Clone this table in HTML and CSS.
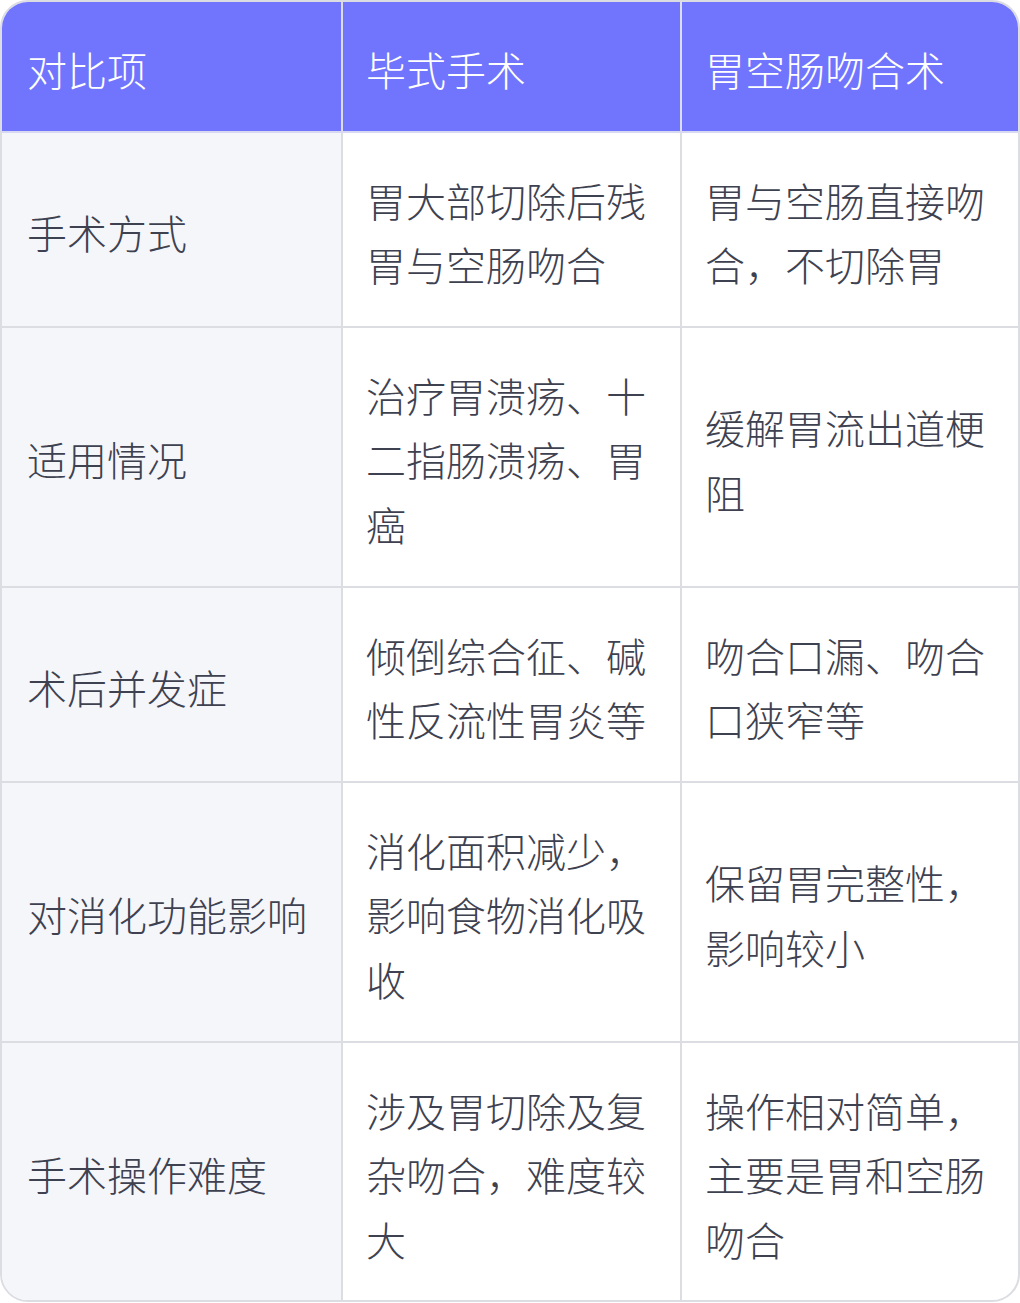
FILE: index.html
```html
<!DOCTYPE html>
<html lang="zh-CN">
<head>
<meta charset="utf-8">
<link rel="stylesheet" href="styles.css">
</head>
<body>
<table class="cmp">
  <colgroup>
    <col class="c1">
    <col class="c2">
    <col class="c3">
  </colgroup>
  <thead>
    <tr>
      <th class="first">对比项</th>
      <th>毕式手术</th>
      <th>胃空肠吻合术</th>
    </tr>
  </thead>
  <tbody>
    <tr>
      <td class="key">手术方式</td>
      <td>胃大部切除后残胃与空肠吻合</td>
      <td>胃与空肠直接吻合，不切除胃</td>
    </tr>
    <tr>
      <td class="key">适用情况</td>
      <td>治疗胃溃疡、十二指肠溃疡、胃癌</td>
      <td>缓解胃流出道梗阻</td>
    </tr>
    <tr>
      <td class="key">术后并发症</td>
      <td>倾倒综合征、碱性反流性胃炎等</td>
      <td>吻合口漏、吻合口狭窄等</td>
    </tr>
    <tr>
      <td class="key">对消化功能影响</td>
      <td>消化面积减少，影响食物消化吸收</td>
      <td>保留胃完整性，影响较小</td>
    </tr>
    <tr>
      <td class="key">手术操作难度</td>
      <td>涉及胃切除及复杂吻合，难度较大</td>
      <td>操作相对简单，主要是胃和空肠吻合</td>
    </tr>
  </tbody>
</table>
</body>
</html>
```

FILE: styles.css
```css
html, body {
  margin: 0;
  padding: 0;
  background: #ffffff;
}
body {
  font-family: "Noto Sans CJK SC", "Noto Sans", sans-serif;
}
.cmp {
  width: 1020px;
  table-layout: fixed;
  border-collapse: separate;
  border-spacing: 0;
  border: 2px solid #dcdde3;
  border-radius: 28px;
  overflow: hidden;
  font-size: 40px;
  line-height: 64.6px;
  color: #3e4150;
  font-weight: 300;
}
.cmp .c1 { width: 341px; }
.cmp .c2 { width: 339px; }
.cmp .c3 { width: 336px; }
.cmp th, .cmp td {
  text-align: left;
  vertical-align: middle;
  padding: 35px 24px 29px 23px;
  border-right: 2px solid #dcdde3;
  border-bottom: 2px solid #dcdde3;
  font-weight: 300;
}
.cmp th.first, .cmp td.key {
  padding-left: 25px;
}
.cmp th:last-child, .cmp td:last-child {
  border-right: none;
}
.cmp tbody tr:last-child td {
  border-bottom: none;
}
.cmp th {
  background: #7175fe;
  color: #ffffff;
  border-bottom-color: #d7d8f2;
}
.cmp td.key {
  background: #f5f6fa;
}
```
